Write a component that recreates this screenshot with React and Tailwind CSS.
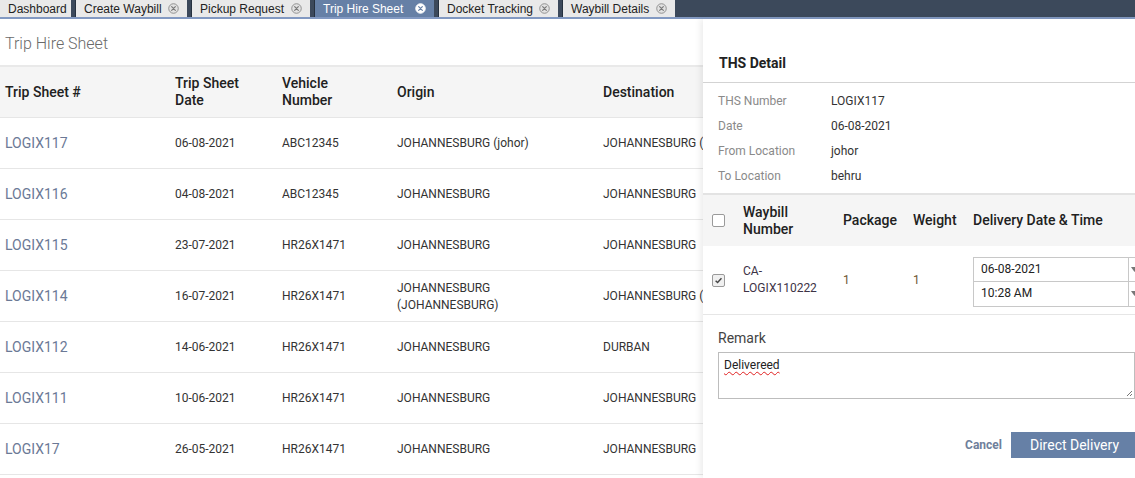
import React from "react";

const tabs = [
  { label: "Dashboard", w: "w-[71px]", close: false },
  { label: "Create Waybill", w: "w-[112px]", close: true },
  { label: "Pickup Request", w: "w-[119px]", close: true },
  { label: "Trip Hire Sheet", w: "w-[120px]", close: true, active: true },
  { label: "Docket Tracking", w: "w-[120px]", close: true },
  { label: "Waybill Details", w: "w-[113px]", close: true },
];

const rows = [
  { id: "LOGIX117", date: "06-08-2021", veh: "ABC12345", origin: "JOHANNESBURG (johor)", dest: "JOHANNESBURG (johor)" },
  { id: "LOGIX116", date: "04-08-2021", veh: "ABC12345", origin: "JOHANNESBURG", dest: "JOHANNESBURG" },
  { id: "LOGIX115", date: "23-07-2021", veh: "HR26X1471", origin: "JOHANNESBURG", dest: "JOHANNESBURG" },
  { id: "LOGIX114", date: "16-07-2021", veh: "HR26X1471", origin: "JOHANNESBURG (JOHANNESBURG)", dest: "JOHANNESBURG (JOHANNESBURG)" },
  { id: "LOGIX112", date: "14-06-2021", veh: "HR26X1471", origin: "JOHANNESBURG", dest: "DURBAN" },
  { id: "LOGIX111", date: "10-06-2021", veh: "HR26X1471", origin: "JOHANNESBURG", dest: "JOHANNESBURG" },
  { id: "LOGIX17", date: "26-05-2021", veh: "HR26X1471", origin: "JOHANNESBURG", dest: "JOHANNESBURG" },
];

const details = [
  ["THS Number", "LOGIX117"],
  ["Date", "06-08-2021"],
  ["From Location", "johor"],
  ["To Location", "behru"],
];

function CloseIcon({ active }) {
  return (
    <svg width="11" height="11" viewBox="0 0 12 12" className="shrink-0">
      <circle
        cx="6"
        cy="6"
        r="5.2"
        fill={active ? "#ffffff" : "#e2e2e2"}
        stroke={active ? "#ffffff" : "#8a8a8a"}
        strokeWidth="1"
      />
      <path
        d="M4 4 L8 8 M8 4 L4 8"
        stroke={active ? "#6680a6" : "#7a7a7a"}
        strokeWidth="1.3"
        strokeLinecap="round"
      />
    </svg>
  );
}

function Checkbox({ checked }) {
  return (
    <div
      className={`w-[13px] h-[13px] border border-[#9a9a9a] rounded-[2px] flex items-center justify-center ${
        checked ? "bg-[#f0f0f0]" : "bg-white"
      }`}
    >
      {checked && (
        <svg width="9" height="9" viewBox="0 0 10 10">
          <path d="M1.8 5.2 L4 7.3 L8.3 2.6" fill="none" stroke="#444" strokeWidth="1.6" />
        </svg>
      )}
    </div>
  );
}

function SelectBox({ value, top }) {
  return (
    <div
      className={`flex h-[25px] w-[170px] border border-[#c8c8c8] bg-white ${top ? "" : "border-t-0"}`}
    >
      <div className="flex-1 flex items-center pl-[7px] text-[12px] text-[#222]">{value}</div>
      <div className="w-[14px] border-l border-[#c8c8c8] flex items-center pl-[2px]">
        <svg width="7" height="5" viewBox="0 0 7 5">
          <path d="M0 0 L7 0 L3.5 5 Z" fill="#777" />
        </svg>
      </div>
    </div>
  );
}

export default function App() {
  return (
    <div className="relative w-[1135px] h-[478px] overflow-hidden bg-white font-['Roboto',sans-serif]">
      {/* tab strip */}
      <div className="h-[19px] bg-[#3c495b] border-b-2 border-[#8299c2] flex gap-[4px] font-['Liberation_Sans',Arial,sans-serif] text-[12px]">
        {tabs.map((t) => (
          <div
            key={t.label}
            className={`${t.w} h-[17px] flex items-center pl-[8px] pr-[8px] border-l border-[#26313f] first:border-l-0 ${
              t.active ? "bg-[#6680a6] text-white" : "bg-[#e9e9e9] text-[#222]"
            }`}
          >
            <span className="whitespace-nowrap">{t.label}</span>
            {t.close && (
              <span className="ml-auto">
                <CloseIcon active={t.active} />
              </span>
            )}
          </div>
        ))}
      </div>

      {/* page */}
      <div className="pt-[15px] pb-[11px] pl-[5px] text-[16px] leading-[20px] text-[#6a6a6a] font-light">
        Trip Hire Sheet
      </div>
      <div className="border-t-2 border-[#e9e9e9]">
        <div className="grid grid-cols-[170px_107px_115px_206px_1fr] pl-[5px] h-[51px] items-center bg-[#f5f5f5] border-b border-[#e6e6e6] text-[14px] leading-[17px] font-medium text-[#212121]">
          <div>Trip Sheet #</div>
          <div>
            Trip Sheet
            <br />
            Date
          </div>
          <div>
            Vehicle
            <br />
            Number
          </div>
          <div>Origin</div>
          <div>Destination</div>
        </div>
        {rows.map((r) => (
          <div
            key={r.id}
            className="grid grid-cols-[170px_107px_115px_206px_1fr] pl-[5px] pt-[1px] h-[51px] items-center border-b border-[#e6e6e6] text-[12px] leading-[17px] text-[#333]"
          >
            <div className="text-[14px] text-[#6b7996]">{r.id}</div>
            <div>{r.date}</div>
            <div>{r.veh}</div>
            <div className="max-w-[180px]">{r.origin}</div>
            <div className="whitespace-nowrap">{r.dest}</div>
          </div>
        ))}
      </div>

      {/* THS detail drawer */}
      <div className="absolute top-[19px] right-0 bottom-0 w-[432px] bg-white shadow-[-3px_0_6px_rgba(0,0,0,0.07)]">
        <div className="pl-[16px] pt-[34px] pb-[9px] border-b border-[#d3d3d3] text-[14px] leading-[20px] font-bold text-[#222]">
          THS Detail
        </div>
        <div className="pl-[15px] pt-[5px] pb-[5px] border-b-2 border-[#e3e3e3]">
          {details.map(([k, v]) => (
            <div key={k} className="flex h-[25px] items-center text-[12px]">
              <div className="w-[113px] text-[#8a8a8a]">{k}</div>
              <div className="text-[#333]">{v}</div>
            </div>
          ))}
        </div>
        <div className="grid grid-cols-[40px_100px_70px_60px_1fr] h-[51px] items-center bg-[#f5f5f5] text-[14px] leading-[17px] font-medium text-[#212121]">
          <div className="pl-[9px]">
            <Checkbox />
          </div>
          <div>
            Waybill
            <br />
            Number
          </div>
          <div>Package</div>
          <div>Weight</div>
          <div className="whitespace-nowrap">Delivery Date &amp; Time</div>
        </div>
        <div className="grid grid-cols-[40px_100px_70px_60px_1fr] h-[69px] items-center border-b border-[#e6e6e6] text-[12px] leading-[17px]">
          <div className="pl-[9px]">
            <Checkbox checked />
          </div>
          <div className="text-[#3d3346]">
            <div>CA-</div>
            <div>LOGIX110222</div>
          </div>
          <div className="text-[#6e5632]">1</div>
          <div className="text-[#6e5632]">1</div>
          <div className="mt-[3px]">
            <SelectBox value="06-08-2021" top />
            <SelectBox value="10:28 AM" />
          </div>
        </div>
        <div className="pl-[15px]">
          <div className="mt-[13px] mb-[4px] text-[14px] leading-[20px] text-[#444]">Remark</div>
          <div className="relative h-[47px] border border-[#bdbdbd] pl-[5px] pt-[3px] text-[12px] text-[#222]">
            <span className="underline decoration-wavy decoration-[#e02020] decoration-1 underline-offset-2">
              Delivereed
            </span>
            <svg width="8" height="8" viewBox="0 0 8 8" className="absolute right-[1px] bottom-[1px]">
              <path d="M7 2 L2 7 M7 5 L5 7" stroke="#777" strokeWidth="1" />
            </svg>
          </div>
          <div className="mt-[33px] flex items-center justify-end gap-[9px]">
            <button className="text-[12px] font-bold text-[#6f7f9b]">Cancel</button>
            <button className="h-[26px] w-[124px] bg-[#6680a6] text-white text-[14px] text-left pl-[19px]">
              Direct Delivery
            </button>
          </div>
        </div>
      </div>
    </div>
  );
}
